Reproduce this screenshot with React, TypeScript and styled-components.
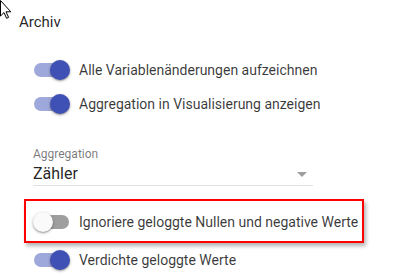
import styled, { createGlobalStyle } from 'styled-components';

const settings = [
  { id: 'record', label: 'Alle Variablenänderungen aufzeichnen', checked: true },
  { id: 'visual', label: 'Aggregation in Visualisierung anzeigen', checked: true },
];

const GlobalStyle = createGlobalStyle`
  html, body {
    margin: 0;
    padding: 0;
    background: #ffffff;
  }
  body {
    font-family: Roboto, "Liberation Sans", Arial, sans-serif;
    color: rgba(0, 0, 0, 0.87);
  }
`;

function Toggle({ checked }: { checked: boolean }) {
  return (
    <SwitchBox aria-hidden="true">
      <Track $checked={checked} />
      <Thumb $checked={checked} />
    </SwitchBox>
  );
}

function Cursor() {
  return (
    <CursorWrap viewBox="0 0 12 19" width="12" height="19" aria-hidden="true">
      <path
        d="M0.5 0.5 L0.5 16 L4 12.6 L6.6 18.3 L8.6 17.4 L6 11.8 L10.8 11.8 Z"
        fill="#ffffff"
        stroke="#000000"
        strokeWidth="1"
        strokeLinejoin="miter"
      />
    </CursorWrap>
  );
}

export default function App() {
  return (
    <Page>
      <GlobalStyle />
      <Cursor />
      <Heading>Archiv</Heading>

      <List>
        {settings.map((s) => (
          <Row key={s.id}>
            <Toggle checked={s.checked} />
            <RowLabel>{s.label}</RowLabel>
          </Row>
        ))}
      </List>

      <Field>
        <FieldLabel>Aggregation</FieldLabel>
        <SelectValue>
          <span>Zähler</span>
          <Caret />
        </SelectValue>
      </Field>

      <Highlight>
        <Row>
          <Toggle checked={false} />
          <RowLabel>Ignoriere geloggte Nullen und negative Werte</RowLabel>
        </Row>
      </Highlight>

      <Row>
        <Toggle checked={true} />
        <RowLabel>Verdichte geloggte Werte</RowLabel>
      </Row>
    </Page>
  );
}

const Page = styled.div`
  position: relative;
  width: 400px;
  height: 276px;
  overflow: hidden;
  padding: 12px 0 0 0;
  box-sizing: border-box;
`;

const CursorWrap = styled.svg`
  position: absolute;
  left: 0;
  top: 0;
`;

const Heading = styled.h2`
  margin: 0 0 21px 19px;
  font-size: 15px;
  line-height: 20px;
  font-weight: 400;
  color: rgba(0, 0, 0, 0.87);
`;

const List = styled.div`
  display: flex;
  flex-direction: column;
`;

const Row = styled.div`
  display: flex;
  align-items: center;
  gap: 9px;
  height: 34px;
  padding-left: 33px;
`;

const SwitchBox = styled.span`
  position: relative;
  width: 37px;
  height: 20px;
  flex: none;
`;

const Track = styled.span<{ $checked: boolean }>`
  position: absolute;
  left: 1px;
  top: 3px;
  width: 35px;
  height: 14px;
  border-radius: 7px;
  background: ${(p) => (p.$checked ? '#9fa8da' : '#9e9e9e')};
`;

const Thumb = styled.span<{ $checked: boolean }>`
  position: absolute;
  top: 0;
  left: ${(p) => (p.$checked ? '17px' : '0')};
  width: 20px;
  height: 20px;
  border-radius: 50%;
  background: ${(p) => (p.$checked ? '#3f51b5' : '#fafafa')};
  box-shadow: 0 1px 3px rgba(0, 0, 0, 0.35), 0 1px 1px rgba(0, 0, 0, 0.14);
`;

const RowLabel = styled.span`
  font-size: 14px;
  line-height: 20px;
  color: rgba(0, 0, 0, 0.78);
`;

const Field = styled.div`
  display: flex;
  flex-direction: column;
  gap: 2px;
  width: 280px;
  margin: 25px 0 0 33px;
`;

const FieldLabel = styled.label`
  font-size: 12px;
  line-height: 16px;
  color: rgba(0, 0, 0, 0.54);
`;

const SelectValue = styled.div`
  display: flex;
  align-items: center;
  justify-content: space-between;
  font-size: 16px;
  line-height: 20px;
  padding-bottom: 1px;
  border-bottom: 1px solid rgba(0, 0, 0, 0.12);
  color: rgba(0, 0, 0, 0.87);
`;

const Caret = styled.span`
  width: 0;
  height: 0;
  margin-right: 6px;
  border-left: 5px solid transparent;
  border-right: 5px solid transparent;
  border-top: 5px solid rgba(0, 0, 0, 0.38);
`;

const Highlight = styled.div`
  width: 340px;
  height: 44px;
  margin: 13px 0 0 24px;
  box-sizing: border-box;
  border: 2px solid #ff0000;
  box-shadow: 2px 3px 4px rgba(0, 0, 0, 0.3);
  display: flex;
  align-items: flex-end;
  padding-bottom: 2px;

  & > ${Row} {
    padding-left: 7px;
  }
`;
